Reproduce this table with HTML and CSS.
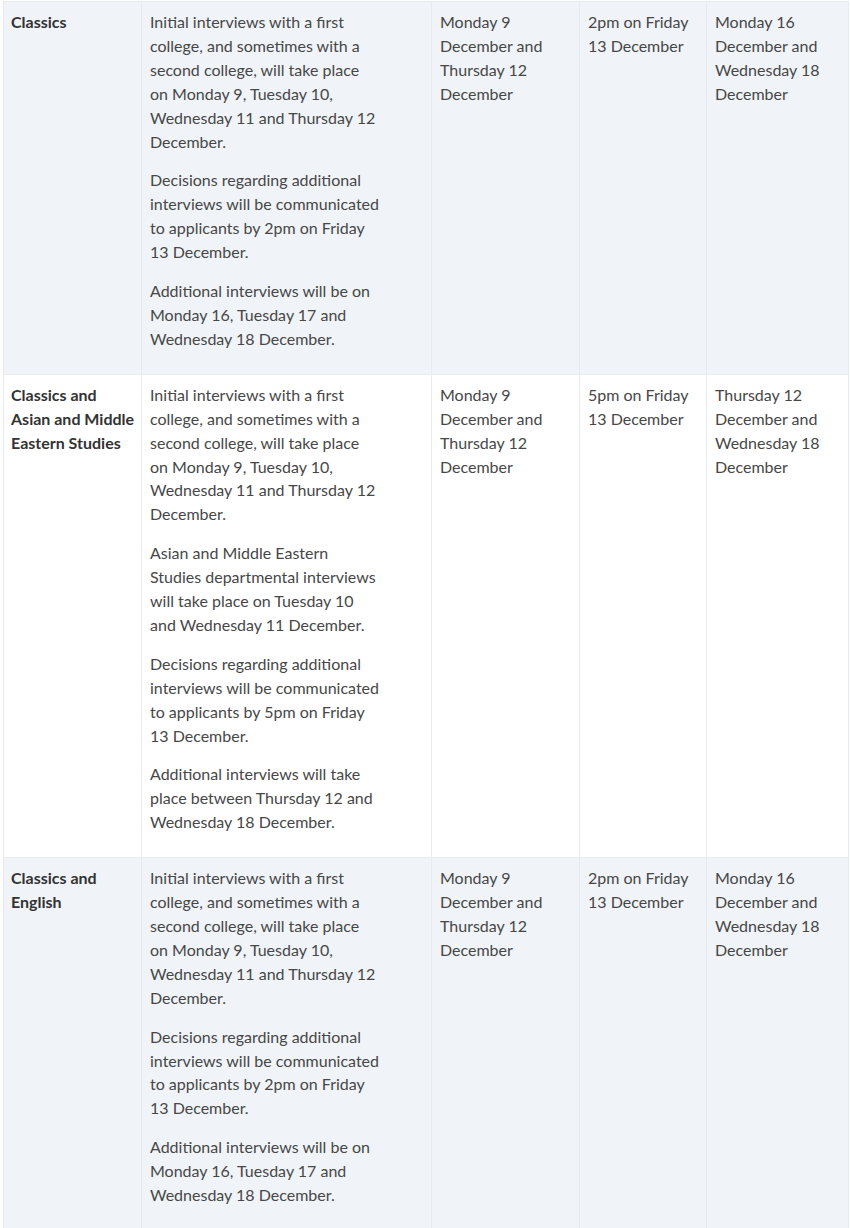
FILE: index.html
```html
<!DOCTYPE html>
<html lang="en">
<head>
<meta charset="utf-8">
<title>Interview dates</title>
<link rel="stylesheet" href="styles.css">
</head>
<body>
<div class="wrap">
<table class="dates">
  <colgroup>
    <col class="c1"><col class="c2"><col class="c3"><col class="c4"><col class="c5">
  </colgroup>
  <tbody>
    <tr class="shade">
      <th>Classics</th>
      <td class="desc">
        <p>Initial interviews with a first college, and sometimes with a second college, will take place on Monday 9, Tuesday 10, Wednesday 11 and Thursday 12 December.</p>
        <p>Decisions regarding additional interviews will be communicated to applicants by 2pm on Friday 13 December.</p>
        <p>Additional interviews will be on Monday 16, Tuesday 17 and Wednesday 18 December.</p>
      </td>
      <td><p>Monday 9 December and Thursday 12 December</p></td>
      <td><p>2pm on Friday 13 December</p></td>
      <td><p>Monday 16 December and Wednesday 18 December</p></td>
    </tr>
    <tr>
      <th>Classics and Asian and Middle Eastern Studies</th>
      <td class="desc">
        <p>Initial interviews with a first college, and sometimes with a second college, will take place on Monday 9, Tuesday 10, Wednesday 11 and Thursday 12 December.</p>
        <p>Asian and Middle Eastern Studies departmental interviews will take place on Tuesday 10 and Wednesday 11 December.</p>
        <p>Decisions regarding additional interviews will be communicated to applicants by 5pm on Friday 13 December.</p>
        <p>Additional interviews will take place between Thursday 12 and Wednesday 18 December.</p>
      </td>
      <td><p>Monday 9 December and Thursday 12 December</p></td>
      <td><p>5pm on Friday 13 December</p></td>
      <td><p>Thursday 12 December and Wednesday 18 December</p></td>
    </tr>
    <tr class="shade">
      <th>Classics and English</th>
      <td class="desc">
        <p>Initial interviews with a first college, and sometimes with a second college, will take place on Monday 9, Tuesday 10, Wednesday 11 and Thursday 12 December.</p>
        <p>Decisions regarding additional interviews will be communicated to applicants by 2pm on Friday 13 December.</p>
        <p>Additional interviews will be on Monday 16, Tuesday 17 and Wednesday 18 December.</p>
      </td>
      <td><p>Monday 9 December and Thursday 12 December</p></td>
      <td><p>2pm on Friday 13 December</p></td>
      <td><p>Monday 16 December and Wednesday 18 December</p></td>
    </tr>
  </tbody>
</table>
</div>
</body>
</html>
```

FILE: styles.css
```css
html, body {
  margin: 0;
  padding: 0;
  background: #ffffff;
}
.wrap {
  padding: 1px 2px 0 3px;
}
.dates {
  width: 845px;
  table-layout: fixed;
  border-collapse: collapse;
  font-family: Lato, "Noto Sans", sans-serif;
  font-size: 16px;
  line-height: 23.9px;
  color: #474747;
}
.c1 { width: 138px; }
.c2 { width: 290px; }
.c3 { width: 148px; }
.c4 { width: 127px; }
.c5 { width: 142px; }
.dates th,
.dates td {
  vertical-align: top;
  text-align: left;
  padding: 8px 8px 8px 8px;
  border: 1px solid #e6ebf0;
}
.dates th {
  font-weight: 700;
  color: #333333;
  padding-left: 7px;
  padding-right: 3px;
}
.dates .desc p {
  width: 230px;
}
.dates p {
  margin: 0 0 15px 0;
}
.shade th,
.shade td {
  background: #f0f4f8;
}
```
